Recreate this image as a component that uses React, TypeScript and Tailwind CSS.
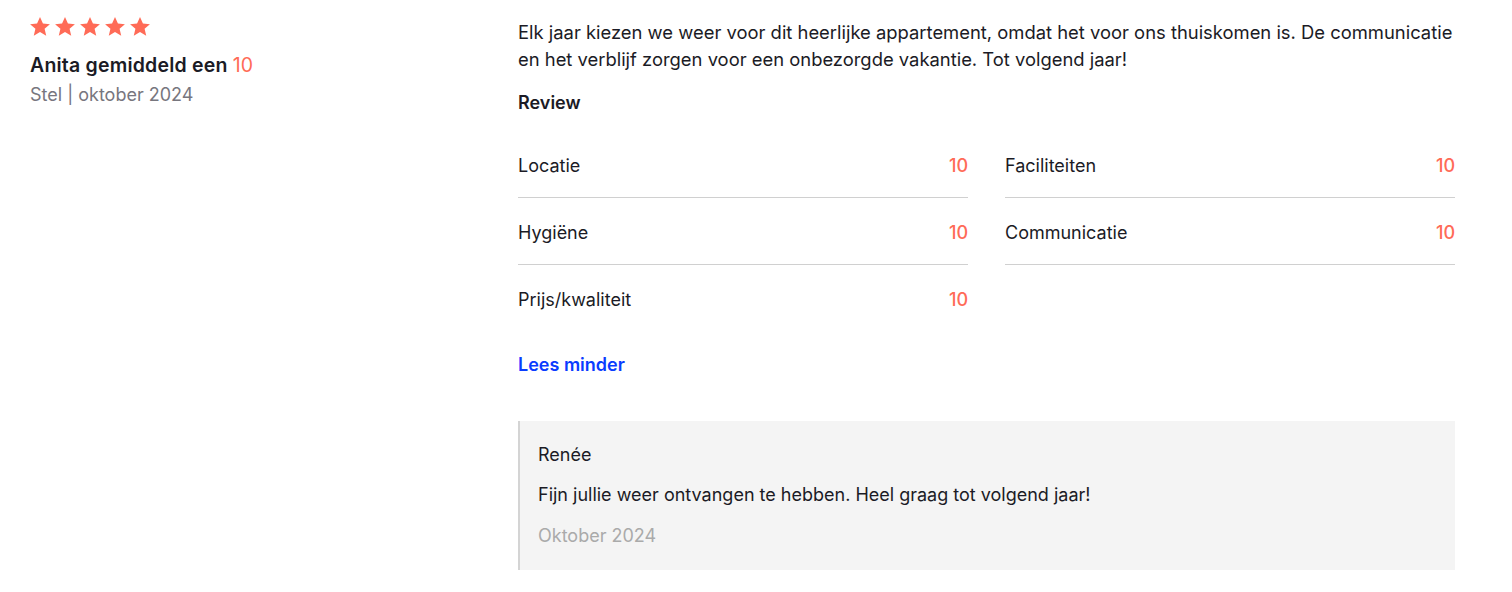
const ratings = [
  { label: "Locatie", score: 10 },
  { label: "Faciliteiten", score: 10 },
  { label: "Hygiëne", score: 10 },
  { label: "Communicatie", score: 10 },
  { label: "Prijs/kwaliteit", score: 10 },
];

function Star() {
  return (
    <svg viewBox="0 0 24 24" className="w-[22px] h-[22px]" fill="#ff6b57">
      <path d="M12 1.2l3.2 7 7.6.7-5.8 5.1 1.8 7.5L12 17.5l-6.8 4 1.8-7.5-5.8-5.1 7.6-.7z" />
    </svg>
  );
}

export default function App() {
  return (
    <div
      className="min-h-screen bg-white text-[#1b1b25]"
      style={{ fontFamily: "Inter, 'Noto Sans', sans-serif" }}
    >
      <div className="flex pl-[30px] pr-[57px] pt-[16px]">
        {/* left: author */}
        <div className="w-[488px] shrink-0">
          <div className="flex gap-[3px] -ml-[1px]">
            {[0, 1, 2, 3, 4].map((i) => (
              <Star key={i} />
            ))}
          </div>
          <div className="mt-[14px] text-[19.5px] leading-[27px] font-semibold tracking-[0.2px]">
            Anita gemiddeld een <span className="font-normal text-[#ff6b57]">10</span>
          </div>
          <div className="mt-[2px] text-[18px] leading-[27px] text-[#77767e]">Stel | oktober 2024</div>
        </div>

        {/* right: review */}
        <div className="flex-1">
          <p className="text-[18.4px] leading-[27px] mt-[3px]">
            Elk jaar kiezen we weer voor dit heerlijke appartement, omdat het voor ons thuiskomen is. De communicatie en
            het verblijf zorgen voor een onbezorgde vakantie. Tot volgend jaar!
          </p>
          <h3 className="mt-[16px] text-[18px] leading-[27px] font-semibold">Review</h3>

          <div className="grid grid-cols-2 gap-x-[37px] mt-[15px]">
            {ratings.map((r, i) => (
              <div
                key={r.label}
                className={
                  i < 4
                    ? "flex justify-between items-center h-[67px] pt-[3px] border-b border-[#d0d0d0]"
                    : "flex justify-between items-center h-[67px] pt-[3px]"
                }
              >
                <span className="text-[18px] -mt-[1px]">{r.label}</span>
                <span className="text-[18px] -mt-[1px] font-medium text-[#ff6b57]">{r.score}</span>
              </div>
            ))}
          </div>

          <a href="#" className="inline-block mt-[19px] text-[18px] leading-[27px] font-semibold text-[#0a3cff]">
            Lees minder
          </a>

          <div className="mt-[43px] bg-[#f4f4f4] border-l-2 border-[#d4d4d4] pl-[18px] pr-[19px] pt-[20px] pb-[21px]">
            <div className="text-[18px] leading-[27px]">Renée</div>
            <div className="mt-[13px] text-[18px] leading-[27px]">
              Fijn jullie weer ontvangen te hebben. Heel graag tot volgend jaar!
            </div>
            <div className="mt-[14px] text-[18px] leading-[27px] text-[#aaaaaa]">Oktober 2024</div>
          </div>
        </div>
      </div>
    </div>
  );
}
